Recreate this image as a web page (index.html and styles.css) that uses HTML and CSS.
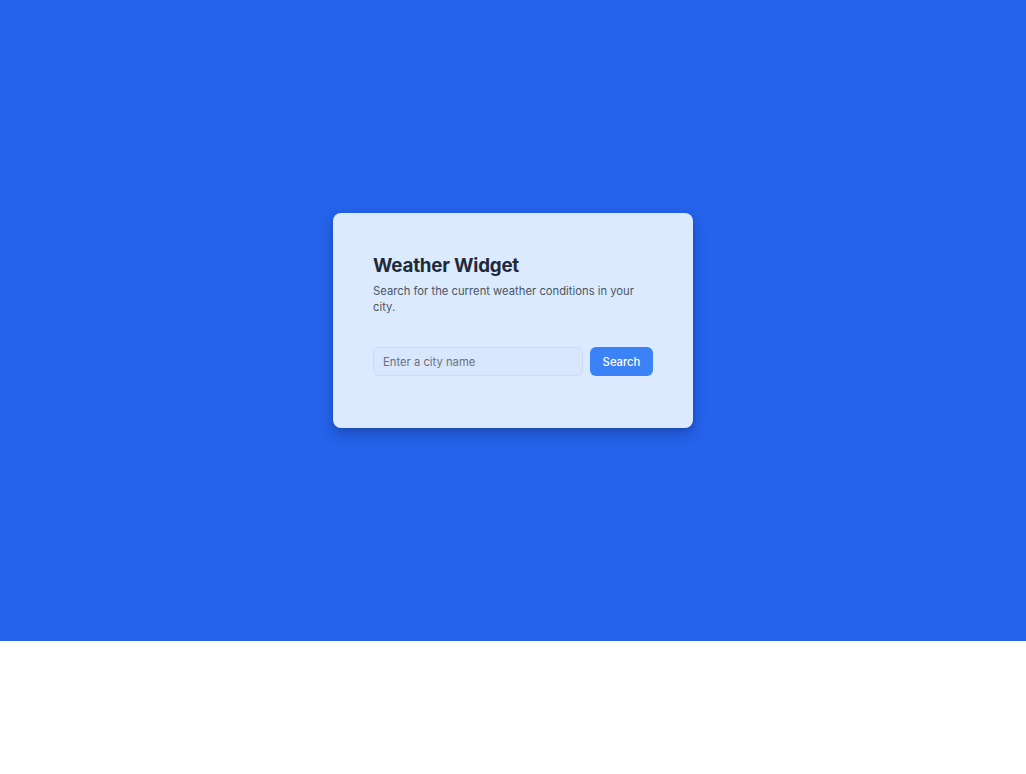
FILE: index.html
```html
<!DOCTYPE html>
<html lang="en">
<head>
<meta charset="utf-8">
<title>Weather Widget</title>
<link rel="stylesheet" href="styles.css">
</head>
<body>
<main class="stage">
  <section class="card">
    <h1 class="title">Weather Widget</h1>
    <p class="subtitle">Search for the current weather conditions in your city.</p>
    <form class="search">
      <input class="search-input" type="text" placeholder="Enter a city name">
      <button class="search-btn" type="button">Search</button>
    </form>
  </section>
</main>
</body>
</html>
```

FILE: styles.css
```css
* { box-sizing: border-box; }
html, body { margin: 0; padding: 0; background: #ffffff; }
body { font-family: Inter, "Noto Sans", sans-serif; }

.stage {
  height: 641px;
  background: #2563eb;
  display: flex;
  align-items: center;
  justify-content: center;
}

.card {
  width: 360px;
  background: #dbeafe;
  border-radius: 8px;
  padding: 41px 40px 52px;
  box-shadow: 0 6px 14px rgba(15, 30, 80, 0.28), 0 2px 4px rgba(15, 30, 80, 0.15);
}

.title {
  margin: 0;
  font-size: 18.75px;
  line-height: 24px;
  font-weight: 700;
  color: #1f2937;
  letter-spacing: -0.2px;
}

.subtitle {
  margin: 5px 0 0;
  font-size: 11.25px;
  line-height: 16px;
  color: #4b5563;
}

.search {
  margin-top: 32px;
  display: flex;
  gap: 7px;
}

.search-input {
  flex: 1;
  min-width: 0;
  height: 29px;
  padding: 0 9px;
  border: 1px solid #c9dcf7;
  border-radius: 6px;
  background: #d8e7fd;
  font-family: inherit;
  font-size: 11.25px;
  color: #1f2937;
  outline: none;
}
.search-input::placeholder { color: #6b7280; }

.search-btn {
  height: 29px;
  width: 63px;
  border: none;
  border-radius: 6px;
  background: #3b82f6;
  color: #ffffff;
  font-family: inherit;
  font-size: 11.25px;
  font-weight: 500;
  cursor: pointer;
}
```
